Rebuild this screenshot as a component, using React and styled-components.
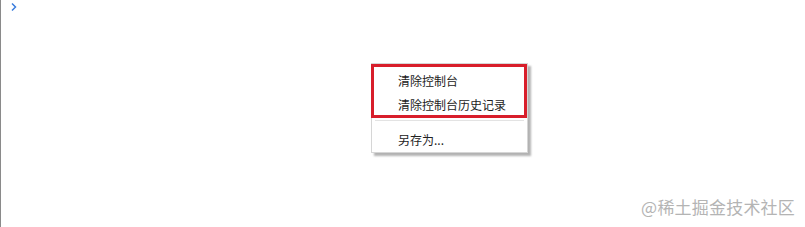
import React from "react";
import styled, { createGlobalStyle } from "styled-components";

const Global = createGlobalStyle`
  html, body {
    margin: 0;
    padding: 0;
    background: #fff;
  }
  body {
    font-family: "Noto Sans CJK SC", "Noto Sans", sans-serif;
  }
`;

const Console = styled.div`
  position: relative;
  width: 805px;
  height: 227px;
  border-left: 1px solid #8a8a8a;
  box-sizing: border-box;
  overflow: hidden;
`;

const PromptRow = styled.div`
  display: flex;
  align-items: center;
  height: 14px;
  padding: 0 0 0 9px;
`;

const Chevron = styled.svg`
  width: 8px;
  height: 10px;
`;

// context menu floats over the console
const Menu = styled.ul`
  position: absolute;
  left: 370px;
  top: 63px;
  width: 157px;
  margin: 0;
  padding: 0;
  list-style: none;
  background: #fff;
  border: 1px solid #d6d6d6;
  box-sizing: border-box;
  box-shadow: 3px 3px 2px rgba(0, 0, 0, 0.3);
`;

// red annotation frame around the first two entries
const Marked = styled.div`
  position: relative;
  padding-top: 5px;

  &::after {
    content: "";
    position: absolute;
    top: 0;
    left: -1px;
    right: 0;
    bottom: -1px;
    border: 3px solid #d81e2b;
    pointer-events: none;
  }
`;

const Item = styled.li`
  height: 24px;
  line-height: 24px;
  padding-left: 26px;
  font-size: 12px;
  color: #222;
  white-space: nowrap;
`;

const Separator = styled.li`
  height: 1px;
  margin: 3px 3px 7px;
  background: #e3e3e3;
`;

const Watermark = styled.div`
  position: absolute;
  right: 10px;
  bottom: 8px;
  font-size: 17px;
  color: #b4b4b4;
  letter-spacing: 0.2px;
`;

export default function App() {
  return (
    <>
      <Global />
      <Console>
        <PromptRow>
          <Chevron viewBox="0 0 8 10">
            <path d="M2 1.5 L5.5 5 L2 8.5" fill="none" stroke="#3b7ddd" strokeWidth="1.5" />
          </Chevron>
        </PromptRow>
        <Menu>
          <Marked>
            <Item>清除控制台</Item>
            <Item>清除控制台历史记录</Item>
          </Marked>
          <Separator />
          <Item>另存为...</Item>
        </Menu>
        <Watermark>@稀土掘金技术社区</Watermark>
      </Console>
    </>
  );
}
